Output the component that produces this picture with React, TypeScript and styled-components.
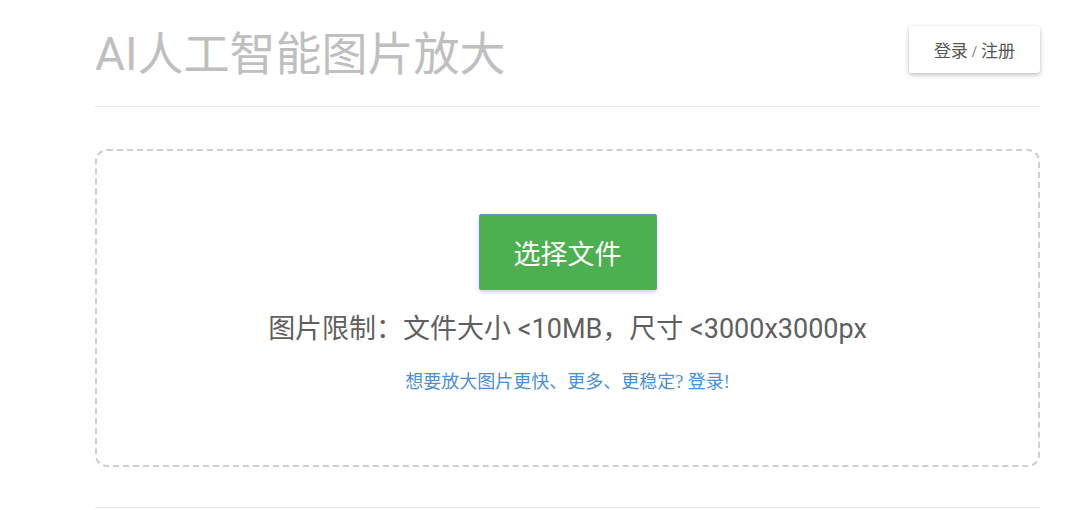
import React from "react";
import styled, { createGlobalStyle } from "styled-components";

const GlobalStyle = createGlobalStyle`
  html, body {
    margin: 0;
    padding: 0;
    background: #ffffff;
  }
  body {
    font-family: Roboto, "Noto Sans CJK SC", sans-serif;
    color: #555;
  }
`;

function App() {
  return (
    <>
      <GlobalStyle />
      <Page>
        <Header>
          <Title>AI人工智能图片放大</Title>
          <LoginButton type="button">登录 / 注册</LoginButton>
        </Header>
        <DropZone>
          <ChooseButton type="button">选择文件</ChooseButton>
          <Limits>图片限制：文件大小 &lt;10MB，尺寸 &lt;3000x3000px</Limits>
          <LoginHint href="#">想要放大图片更快、更多、更稳定? 登录!</LoginHint>
        </DropZone>
        <Footer />
      </Page>
    </>
  );
}

const Page = styled.div`
  padding: 0 50px 0 95px;
`;

const Header = styled.header`
  display: flex;
  align-items: center;
  justify-content: space-between;
  height: 106px;
  border-bottom: 1px solid #e6e6e6;
`;

const Title = styled.h1`
  margin: 0;
  padding-bottom: 6px;
  font-family: Roboto, "Noto Sans CJK SC", sans-serif;
  font-size: 46px;
  font-weight: 400;
  color: #bfbfbf;
`;

const LoginButton = styled.button`
  width: 131px;
  height: 47px;
  margin-bottom: 8px;
  border: none;
  border-radius: 3px;
  background: #fff;
  box-shadow: 0 2px 5px rgba(0, 0, 0, 0.25), 0 0 1px rgba(0, 0, 0, 0.1);
  font-family: "Liberation Serif", "Noto Sans CJK SC", serif;
  font-size: 17px;
  color: #555;
  cursor: pointer;
`;

const DropZone = styled.section`
  margin-top: 42px;
  height: 251px;
  padding-top: 63px;
  border: 2px dashed #cfcfcf;
  border-radius: 12px;
  display: flex;
  flex-direction: column;
  align-items: center;
`;

const ChooseButton = styled.button`
  width: 178px;
  height: 76px;
  border: 1px solid #5f9ab8;
  border-radius: 2px;
  background: #4caf50;
  box-shadow: 0 2px 4px rgba(0, 0, 0, 0.2);
  color: #fff;
  font-family: "Noto Sans CJK SC", sans-serif;
  font-size: 27px;
  cursor: pointer;
`;

const Limits = styled.p`
  margin: 21px 0 0;
  font-family: Roboto, "Noto Sans CJK SC", sans-serif;
  font-size: 27px;
  font-weight: 400;
  line-height: 36px;
  color: #5f5f5f;
`;

const LoginHint = styled.a`
  margin-top: 20px;
  font-family: "Liberation Serif", "Noto Sans CJK SC", serif;
  font-size: 18px;
  color: #4a8fd8;
  text-decoration: none;
`;

const Footer = styled.div`
  margin-top: 40px;
  border-top: 1px solid #e6e6e6;
`;

export default App;
